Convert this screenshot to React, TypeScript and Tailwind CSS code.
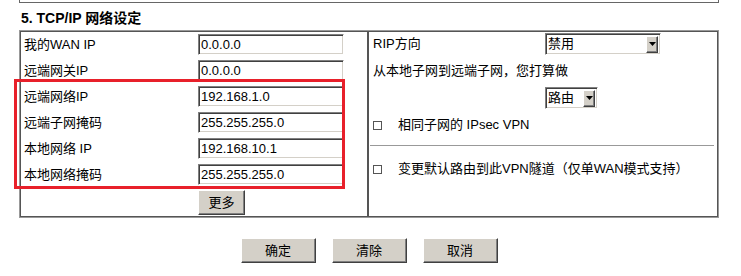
import React from "react"

const font = { fontFamily: '"Liberation Sans", "Noto Sans CJK SC", sans-serif' }

function TextBox({ value }: { value: string }) {
  return (
    <div className="w-[146px] h-[21px] flex items-center pl-[2px] bg-white text-[13px] border border-t-[#808080] border-l-[#808080] border-b-white border-r-white shadow-[inset_1px_1px_#404040,inset_-1px_-1px_#d4d0c8]">
      {value}
    </div>
  )
}

function Arrow() {
  return (
    <div className="w-[12px] h-[17px] flex items-center justify-center bg-[#d4d0c8] border border-t-white border-l-white border-r-[#404040] border-b-[#404040] shadow-[inset_-1px_-1px_#808080]">
      <svg width="7" height="4" viewBox="0 0 7 4">
        <path d="M0 0h7L3.5 4z" fill="#000" />
      </svg>
    </div>
  )
}

function Select({ value, width }: { value: string; width: string }) {
  return (
    <div className={`${width} h-[22px] flex items-center justify-between pl-[2px] pr-[2px] bg-white text-[13px] border border-t-[#808080] border-l-[#808080] border-b-white border-r-white shadow-[inset_1px_1px_#404040,inset_-1px_-1px_#d4d0c8]`}>
      <span>{value}</span>
      <Arrow />
    </div>
  )
}

function Btn({ label, w }: { label: string; w: string }) {
  return (
    <div className={`${w} h-[25px] flex items-center justify-center bg-[#d4d0c8] text-[13px] border border-t-white border-l-white border-r-[#404040] border-b-[#404040] shadow-[inset_-1px_-1px_#808080]`}>
      {label}
    </div>
  )
}

function Check() {
  return <div className="w-[9px] h-[9px] border border-[#555] bg-white" />
}

export default function App() {

  const rows = [
    { label: "我的WAN IP", value: "0.0.0.0" },
    { label: "远端网关IP", value: "0.0.0.0" },
    { label: "远端网络IP", value: "192.168.1.0" },
    { label: "远端子网掩码", value: "255.255.255.0" },
    { label: "本地网络 IP", value: "192.168.10.1" },
    { label: "本地网络掩码", value: "255.255.255.0" },
  ]

  return (
    <div className="w-[741px] h-[276px] bg-white text-black" style={font}>
      <div className="ml-[19px] w-[700px]">

        <div className="h-[3px] border-x border-b border-[#666]" />

        <div className="h-[27px] pt-[3px] flex items-center pl-[2px] text-[14px] font-bold">
          5. TCP/IP 网络设定
        </div>

        <div className="flex h-[188px] border border-[#999]">

          <div className="relative w-[348px] border border-[#555] pl-[3px] pt-[2px] flex flex-col gap-[5px]">
            {rows.map(r => (
              <div key={r.label} className="flex items-center h-[21px] text-[13px]">
                <div className="w-[174px]">{r.label}</div>
                <TextBox value={r.value} />
              </div>
            ))}
            <div className="pl-[174px]">
              <Btn label="更多" w="w-[47px]" />
            </div>
            <div className="absolute left-[-7px] top-[47px] w-[331px] h-[110px] border-[3px] border-[#e8202a]" />
          </div>

          <div className="flex-1 border border-[#555] pt-[1px] text-[13px] flex flex-col">
            <div className="flex items-center h-[22px] pl-[4px]">
              <div className="w-[172px]">RIP方向</div>
              <Select value="禁用" width="w-[116px]" />
            </div>
            <div className="h-[32px] flex items-center pl-[4px]">
              从本地子网到远端子网，您打算做
            </div>
            <div className="h-[21px] pl-[176px]">
              <Select value="路由" width="w-[53px]" />
            </div>
            <div className="h-[34px] flex items-center pl-[4px] gap-[16px]">
              <Check />
              <span>相同子网的 IPsec VPN</span>
            </div>
            <div className="mt-[3px] ml-[1px] mr-[3px] border-t border-[#999]" />
            <div className="h-[46px] flex items-center pl-[4px] gap-[16px]">
              <Check />
              <span>变更默认路由到此VPN隧道（仅单WAN模式支持）</span>
            </div>
          </div>

        </div>

        <div className="mt-[20px] flex justify-center gap-[16px]">
          <Btn label="确定" w="w-[75px]" />
          <Btn label="清除" w="w-[75px]" />
          <Btn label="取消" w="w-[75px]" />
        </div>

      </div>
    </div>
  )
}
